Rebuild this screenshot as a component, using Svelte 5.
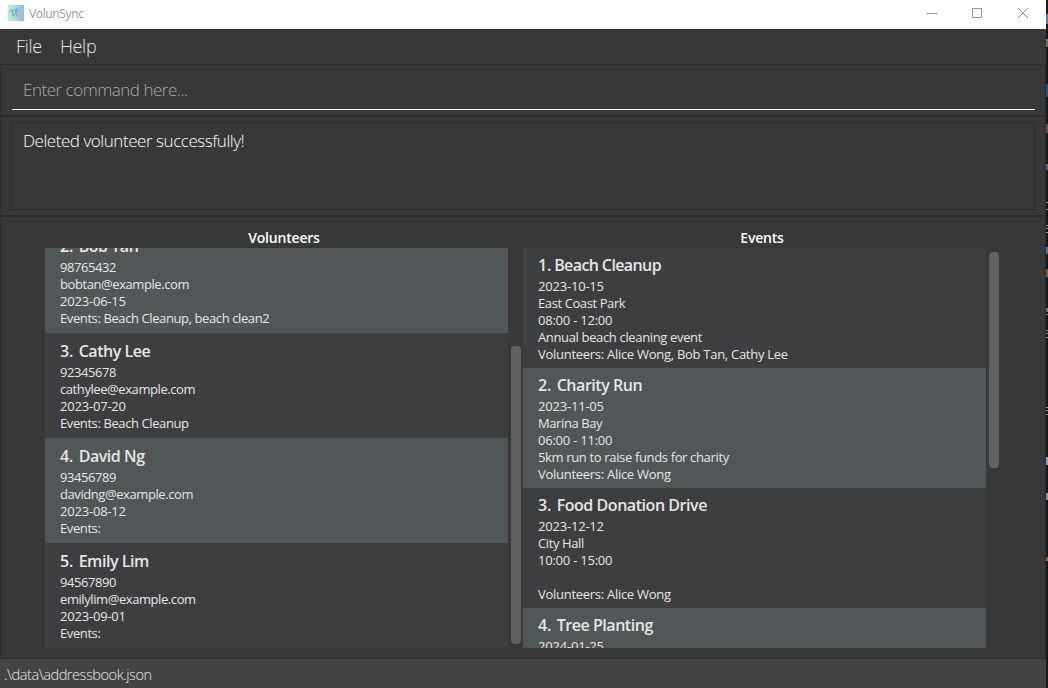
<script>
  const volunteers = [
    { n: 2, name: 'Bob Tan', lines: ['98765432', 'bobtan@example.com', '2023-06-15', 'Events: Beach Cleanup, beach clean2'] },
    { n: 3, name: 'Cathy Lee', lines: ['92345678', 'cathylee@example.com', '2023-07-20', 'Events: Beach Cleanup'] },
    { n: 4, name: 'David Ng', lines: ['93456789', 'davidng@example.com', '2023-08-12', 'Events:'] },
    { n: 5, name: 'Emily Lim', lines: ['94567890', 'emilylim@example.com', '2023-09-01', 'Events:'] }
  ];
  const events = [
    { n: 1, name: 'Beach Cleanup', lines: ['2023-10-15', 'East Coast Park', '08:00 - 12:00', 'Annual beach cleaning event', 'Volunteers: Alice Wong, Bob Tan, Cathy Lee'] },
    { n: 2, name: 'Charity Run', lines: ['2023-11-05', 'Marina Bay', '06:00 - 11:00', '5km run to raise funds for charity', 'Volunteers: Alice Wong'] },
    { n: 3, name: 'Food Donation Drive', lines: ['2023-12-12', 'City Hall', '10:00 - 15:00', '', 'Volunteers: Alice Wong'] },
    { n: 4, name: 'Tree Planting', lines: ['2024-01-25'] }
  ];
  // Slivers of the desktop visible past the window's right edge: [y, height, colour]
  const slivers = [
    [14, 10, '#5d7fae'], [39, 8, '#7b6657'], [84, 13, '#1d5280'], [124, 9, '#71543b'], [164, 6, '#5a5e9a'],
    [202, 1, '#8a8fa5'], [209, 1, '#8a8fa5'], [225, 1, '#999'], [228, 1, '#999'], [232, 1, '#999'],
    [247, 7, '#4c78a8'], [269, 8, '#80572c'], [308, 4, '#84705c'], [314, 1, '#888'], [330, 1, '#999'], [333, 1, '#7186a8'], [337, 1, '#999'],
    [407, 1, '#999'], [410, 1, '#7d95a0'], [414, 1, '#999'], [457, 8, '#909cc0'], [493, 7, '#84909c'], [557, 4, '#806b5b']
  ];
</script>

<div class="screen">
  <div class="window">
    <header class="titlebar">
      <svg class="logo" width="16" height="16" viewBox="0 0 16 16">
        <defs>
          <linearGradient id="g" x1="0" y1="0" x2="1" y2="0">
            <stop offset="0" stop-color="#b9f3cf" />
            <stop offset=".5" stop-color="#a3d7e6" />
            <stop offset="1" stop-color="#94b4f8" />
          </linearGradient>
        </defs>
        <rect width="16" height="16" fill="url(#g)" />
        <g fill="none" stroke-width=".9" stroke-linecap="round">
          <path d="M1.500 7C2 5 4 4.500 4.300 5.500 4.600 7 3.700 10.500 5 10.700 6.500 10.700 7.500 7 8.500 4.500" stroke="#5a91b0" />
          <path d="M5 5.500L10 3.800M9 5C8 7.500 7.500 10.500 8.500 10.800" stroke="#6a98c4" />
          <path d="M12.800 6.200C11.200 5.300 9.800 6.600 10.300 7.700 10.900 8.700 12.900 9.200 12.600 11 12 13 9.200 12.800 9.200 11.200 9.500 10 12 9.300 13.300 7.700" stroke="#d0a78c" />
        </g>
      </svg>
      <span class="title">VolunSync</span>
      <svg class="controls" width="104" height="12" viewBox="0 0 104 12" fill="none" stroke="#999" stroke-width="1" shape-rendering="crispEdges">
        <path d="M0 6.500H10" />
        <rect x="45.500" y="1.500" width="9" height="9" />
        <path d="M91 1L101 11M101 1L91 11" shape-rendering="auto" />
      </svg>
    </header>
    <nav class="menu"><span>File</span><span>Help</span></nav>
    <section class="command"><div class="field">Enter command here...</div></section>
    <section class="result"><div class="message">Deleted volunteer successfully!</div></section>
    <main class="lists">
      <section class="panel volunteers">
        <h2>Volunteers</h2>
        <div class="body">
          <div class="cards">
            {#each volunteers as item}
              <article class:alt={item.n % 2 === 0}>
                <h3><span>{item.n}.</span><span class="name">{item.name}</span></h3>
                {#each item.lines as line}<p>{line}</p>{/each}
              </article>
            {/each}
          </div>
          <div class="track"><div class="thumb"></div></div>
        </div>
      </section>
      <section class="panel events">
        <h2>Events</h2>
        <div class="body">
          <div class="cards">
            {#each events as item}
              <article class:alt={item.n % 2 === 0}>
                <h3><span>{item.n}.</span><span class="name">{item.name}</span></h3>
                {#each item.lines as line}<p>{line}</p>{/each}
              </article>
            {/each}
          </div>
          <div class="track"><div class="thumb"></div></div>
        </div>
      </section>
    </main>
    <footer>.\data\addressbook.json</footer>
  </div>
  <svg class="desktop" width="2" height="688" shape-rendering="crispEdges">
    {#each slivers as [y, h, c]}<rect x="0" {y} width="2" height={h} fill={c} />{/each}
  </svg>
</div>

<style>
  :global(body) { margin: 0; background: #18191a; overflow: hidden; }
  .screen { display: flex; width: 1048px; height: 688px; background: #18191b; font-family: "Open Sans", "Noto Sans", sans-serif; }
  .window { display: flex; flex-direction: column; width: 1046px; height: 688px; background: #383838; color: #e6e6e6; }
  .window > * { flex: none; }
  .desktop { display: block; width: 2px; }
  .titlebar { display: flex; align-items: center; height: 29px; box-sizing: border-box; padding: 0 15px 3px 8px; background: #fff; color: #999; }
  .title { margin-left: 5px; padding-top: 2px; font-size: 12px; line-height: 16px; letter-spacing: -0.35px; }
  .controls { margin-left: auto; }
  .menu { display: flex; gap: 18px; height: 35px; box-sizing: border-box; padding: 5px 16px 0; font-size: 18px; font-weight: 300; line-height: 25px; letter-spacing: -0.3px; }
  .command { height: 52px; box-sizing: border-box; border: 1px solid #2b2b2b; padding: 9px 10px 0 11px; }
  .field { height: 36px; box-sizing: border-box; border-bottom: 1px solid #fff; padding-left: 11px; font-size: 17px; font-weight: 300; line-height: 32px; letter-spacing: -0.48px; color: #aaa; }
  .result { height: 100px; box-sizing: border-box; border: 1px solid #2b2b2b; padding: 5px 10px; }
  .message { height: 88px; box-sizing: border-box; border: 1px solid #2b2b2b; padding: 5px 11px; color: #fff; font-size: 17px; font-weight: 300; line-height: 25px; letter-spacing: -0.45px; }
  .lists { display: flex; height: 443px; box-sizing: border-box; border: 1px solid #2b2b2b; padding: 10px 0 0 44px; }
  .panel { width: 478px; }
  h2 { margin: 0; width: 478px; height: 21px; font-size: 14px; line-height: 22px; font-weight: 600; letter-spacing: -0.2px; text-align: center; color: #fff; }
  .body { display: flex; gap: 3px; height: 400px; }
  .cards { width: 463px; height: 400px; overflow: hidden; }
  article { height: 120px; box-sizing: border-box; padding: 5px 15px; background: #3c3e3f; }
  article.alt { background: #515658; }
  .volunteers article { height: 105px; padding-top: 6px; }
  .volunteers article:first-child { margin-top: -20px; }
  h3 { display: flex; gap: 5.500px; margin: 0; height: 25px; font-size: 16px; line-height: 25px; font-weight: 600; white-space: nowrap; letter-spacing: -0.2px; }
  .events article:first-child h3 { gap: 3px; }
  .name { letter-spacing: -0.45px; }
  .events article:first-child .name { letter-spacing: -0.6px; }
  p { margin: 0; height: 17px; font-size: 13px; line-height: 17px; white-space: nowrap; letter-spacing: -0.2px; }
  .volunteers p:nth-of-type(1), .volunteers p:nth-of-type(2) { letter-spacing: -0.42px; }
  .volunteers p:nth-of-type(4), .events p:nth-of-type(2) { letter-spacing: -0.4px; }
  .events p:nth-of-type(3) { letter-spacing: -0.23px; }
  .events p:nth-of-type(5) { letter-spacing: -0.28px; }
  .events p:nth-of-type(4) { letter-spacing: -0.35px; }
  .track { width: 10px; padding-top: 98px; }
  .events .track { padding-top: 4px; }
  .thumb { height: 298px; border-radius: 4px; background: #606060; }
  .events .thumb { height: 216px; }
  footer { height: 29px; background: #444; padding-left: 4px; font-size: 14.6px; font-weight: 300; line-height: 31px; letter-spacing: -0.47px; }
</style>
